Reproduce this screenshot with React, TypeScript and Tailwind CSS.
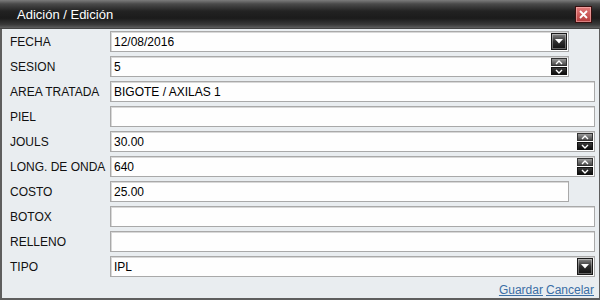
import React from "react";

type Kind = "text" | "select" | "spin";

interface Field {
  label: string;
  value: string;
  kind: Kind;
  short?: boolean;
}

const fields: Field[] = [
  { label: "FECHA", value: "12/08/2016", kind: "select", short: true },
  { label: "SESION", value: "5", kind: "spin", short: true },
  { label: "AREA TRATADA", value: "BIGOTE / AXILAS 1", kind: "text" },
  { label: "PIEL", value: "", kind: "text" },
  { label: "JOULS", value: "30.00", kind: "spin" },
  { label: "LONG. DE ONDA", value: "640", kind: "spin" },
  { label: "COSTO", value: "25.00", kind: "text", short: true },
  { label: "BOTOX", value: "", kind: "text" },
  { label: "RELLENO", value: "", kind: "text" },
  { label: "TIPO", value: "IPL", kind: "select" },
];

const SelectButton: React.FC = () => (
  <div className="w-[16px] h-[17px] border border-[#1a1a1a] bg-gradient-to-b from-[#8a8a8a] via-[#2e2e2e] to-[#111111] flex items-center justify-center shadow-[inset_0_0_0_1px_rgba(255,255,255,0.35)]">
    <svg width="8" height="5" viewBox="0 0 8 5">
      <path d="M0 0 H8 L4 4.5 Z" fill="#ffffff" />
    </svg>
  </div>
);

const SpinButtons: React.FC = () => (
  <div className="flex flex-col gap-[1px]">
    <div className="w-[16px] h-[8px] bg-gradient-to-b from-[#9a9a9a] to-[#4a4a4a] border border-[#333] flex items-center justify-center">
      <svg width="8" height="5" viewBox="0 0 8 5">
        <path d="M1 4 L4 1 L7 4" stroke="#ffffff" strokeWidth="1.4" fill="none" />
      </svg>
    </div>
    <div className="w-[16px] h-[8px] bg-gradient-to-b from-[#3a3a3a] to-[#0e0e0e] border border-[#111] flex items-center justify-center">
      <svg width="8" height="5" viewBox="0 0 8 5">
        <path d="M1 1 L4 4 L7 1" stroke="#ffffff" strokeWidth="1.4" fill="none" />
      </svg>
    </div>
  </div>
);

const App: React.FC = () => {
  return (
    <div
      className="w-[600px] h-[300px] flex flex-col bg-[#e9edf0] overflow-hidden"
      style={{ fontFamily: '"Liberation Sans", Arial, sans-serif' }}
    >
      {/* Title bar */}
      <div className="h-[29px] shrink-0 flex items-center justify-between pl-[17px] pr-[8px] bg-[linear-gradient(to_bottom,#7c7c7c_0%,#4a4a4a_14%,#222222_40%,#1b1b1b_65%,#3a3a3a_88%,#606060_100%)] border-b border-[#444]">
        <span className="text-[13px] text-white leading-none">Adición / Edición</span>
        <div className="w-[17px] h-[17px] border border-[#3a1010] bg-gradient-to-b from-[#e47a7a] to-[#b33a3a] flex items-center justify-center shadow-[inset_0_0_0_1px_rgba(255,200,200,0.5)]">
          <svg width="9" height="9" viewBox="0 0 9 9">
            <path d="M1 1 L8 8 M8 1 L1 8" stroke="#ffffff" strokeWidth="1.8" />
          </svg>
        </div>
      </div>

      {/* Body */}
      <div className="flex-1 flex flex-col border-l-2 border-b-2 border-r border-[#5e5e5e] pt-[2px] pr-[4px]">
        <div className="flex flex-col gap-[4px]">
          {fields.map((f) => (
            <div key={f.label} className="flex items-center h-[21px]">
              <div className="w-[108px] pl-[8px] text-[12px] text-[#111] whitespace-nowrap">
                {f.label}
              </div>
              <div
                className={`h-[21px] flex items-center border border-[#a9a9a9] bg-[#fefefe] shadow-[inset_1px_1px_0_#d8d8d8] ${
                  f.short ? "w-[459px]" : "w-[485px]"
                }`}
              >
                <span className="flex-1 pl-[3px] text-[12px] text-black leading-none">
                  {f.value}
                </span>
                {f.kind === "select" && (
                  <div className="pr-[1px]">
                    <SelectButton />
                  </div>
                )}
                {f.kind === "spin" && (
                  <div className="pr-[1px]">
                    <SpinButtons />
                  </div>
                )}
              </div>
            </div>
          ))}
        </div>

        {/* Footer */}
        <div className="flex justify-end gap-[3px] mt-[6px] pr-[1px] text-[12px] leading-[14px]">
          <a href="#" className="text-[#3a6ea5] underline">
            Guardar
          </a>
          <a href="#" className="text-[#3a6ea5] underline">
            Cancelar
          </a>
        </div>
      </div>
    </div>
  );
};

export default App;
